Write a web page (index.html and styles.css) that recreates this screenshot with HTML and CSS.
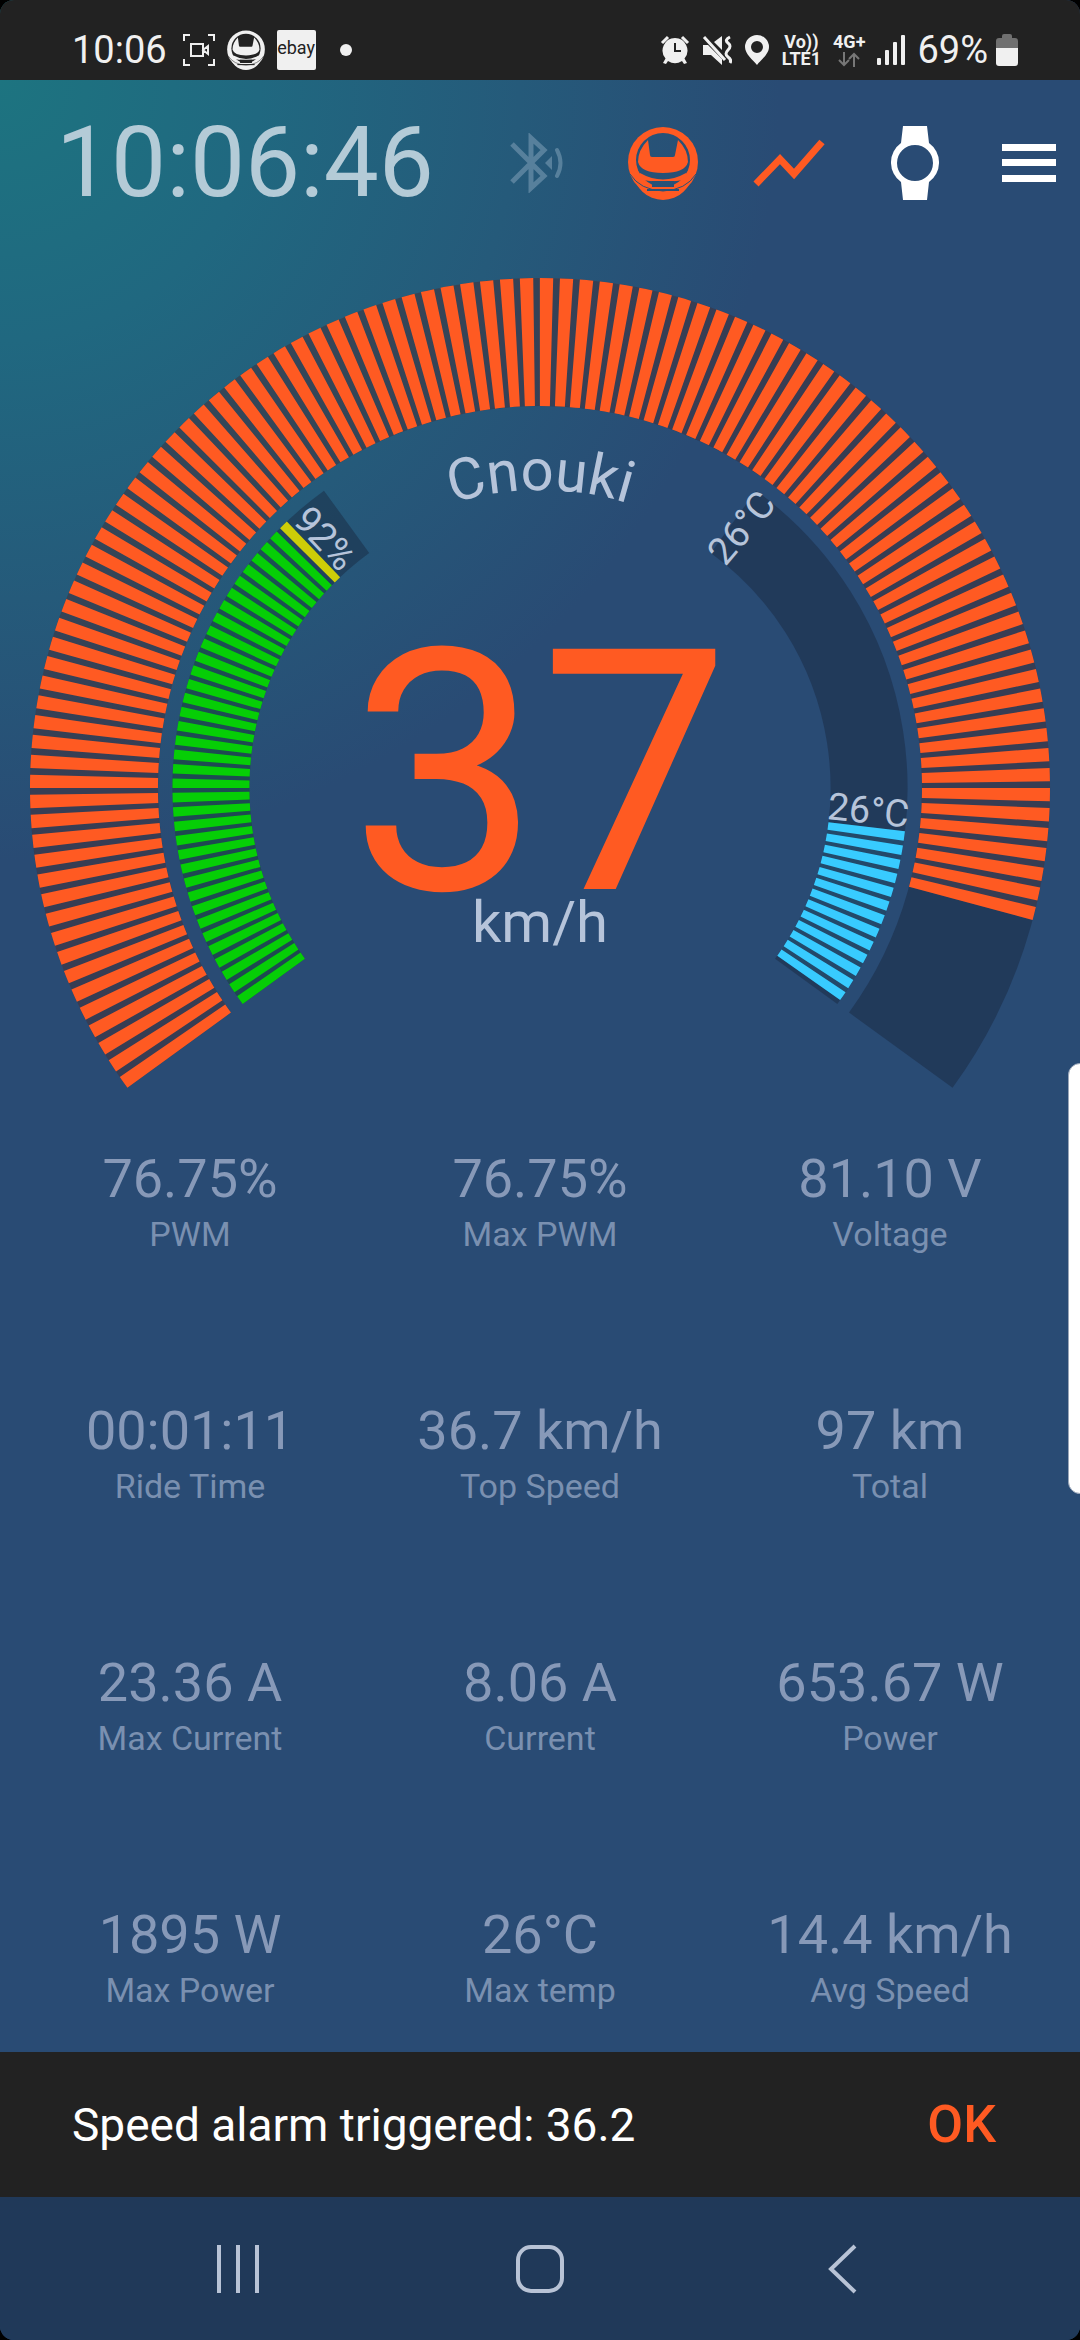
FILE: index.html
```html
<!DOCTYPE html>
<html lang="en">
<head>
<meta charset="utf-8">
<meta name="viewport" content="width=device-width, initial-scale=1">
<title>Ride dashboard</title>
<link rel="stylesheet" href="styles.css">
</head>
<body>
<svg class="defs" aria-hidden="true">
  <symbol id="wheel" viewBox="0 0 70 74">
    <mask id="wheel-cut">
      <rect width="70" height="74" fill="#fff"/>
      <path d="M2 48Q12 64 35 65Q58 64 68 48" fill="none" stroke="#000" stroke-width="1"/>
      <circle cx="35" cy="34" r="27" fill="#000"/>
      <path d="M12 47Q35 60 58 47L62 53Q35 58 8 53Z" fill="#fff"/>
      <rect x="24" y="55" width="22" height="6" fill="#000"/>
      <rect x="19" y="63" width="32" height="2" fill="#000"/>
    </mask>
    <g mask="url(#wheel-cut)" fill="currentColor">
      <circle cx="35" cy="36" r="35"/>
      <ellipse cx="35" cy="46" rx="29" ry="28"/>
    </g>
    <path d="M20 14L22 29Q22 31 24 31H45Q47 31 47 29L50 14Q60 24 60 36Q57 47 35 47Q13 47 10 36Q10 24 20 14Z" fill="currentColor"/>
  </symbol>
</svg>

<div class="screen">
  <div class="status">
    <div class="status-left">
      <span class="status-text status-time">10:06</span>
      <svg width="32" height="32" viewBox="0 0 32 32" fill="none" stroke="currentColor" stroke-width="2">
        <path d="M1 7V1H7M25 1H31V7M31 25V31H25M7 31H1V25"/>
        <path d="M8 10H20V22H8ZM20 16L25 12V20Z"/>
      </svg>
      <svg width="38" height="40"><use href="#wheel"/></svg>
      <span class="ebay">ebay</span>
      <span class="dot"></span>
    </div>
    <div class="status-right">
      <svg width="30" height="30" viewBox="0 0 30 30" fill="currentColor">
        <path fill-rule="evenodd" d="M15 3A12.500 12.500 0 0 1 24.500 23.500L27 28L24 29L22 26A12.500 12.500 0 0 1 8 26L6 29L3 28L5.500 23.500A12.500 12.500 0 0 1 15 3ZM14 8V17H21V15H16V8Z"/>
        <path d="M2 8L8 2M22 2L28 8" fill="none" stroke="currentColor" stroke-width="3"/>
      </svg>
      <svg width="30" height="30" viewBox="0 0 30 30" fill="currentColor">
        <path d="M12 7L20 1V15ZM1 10H6L20 24V30L9 20H1Z"/>
        <path d="M2 2L23 25M28 2Q22 5 26 8T26 15T26 22T28 28" fill="none" stroke="currentColor" stroke-width="3"/>
      </svg>
      <svg width="26" height="30" viewBox="0 0 26 30" fill="currentColor">
        <path fill-rule="evenodd" d="M13 0A12 12 0 0 1 25 12C25 19 17 25 13 30C9 25 1 19 1 12A12 12 0 0 1 13 0ZM13 6A6 6 0 1 0 13 18A6 6 0 1 0 13 6Z"/>
      </svg>
      <span class="net">Vo))<br>LTE1</span>
      <span class="net">4G+
        <svg class="arrows" width="24" height="15" viewBox="0 0 24 15" fill="none" stroke="currentColor" stroke-width="2">
          <path d="M7 0V13M2 8L7 13L12 8M17 15V2M12 7L17 2L22 7"/>
        </svg>
      </span>
      <svg width="28" height="30" viewBox="0 0 28 30" fill="currentColor">
        <rect x="0" y="23" width="4" height="7" rx="1"/><rect x="8" y="15" width="4" height="15" rx="1"/><rect x="16" y="7" width="4" height="23" rx="1"/><rect x="24" y="0" width="4" height="30" rx="1"/>
      </svg>
      <span class="battery">
        <span class="status-text">69%</span>
        <svg width="22" height="32" viewBox="0 0 22 32">
          <path d="M0 15V7Q0 4 3 4H6V2Q6 0 8 0H14Q16 0 16 2V4H19Q22 4 22 7V15Z" fill="#707070"/>
          <path d="M0 14H22V29Q22 32 19 32H3Q0 32 0 29Z" fill="currentColor"/>
        </svg>
      </span>
    </div>
  </div>

  <header class="toolbar">
    <time class="clock">10:06:46</time>
    <button class="tool tool-muted" aria-label="Bluetooth">
      <svg width="54" height="60" viewBox="0 0 54 60" fill="none" stroke="currentColor" stroke-width="5">
        <path d="M2 11L34 43L21 55V5L34 17L2 49"/>
        <path d="M47 17Q54 30 47 43" stroke-width="4" stroke-linecap="round"/>
        <path d="M42 23V37L35 30Z" fill="currentColor" stroke="none"/>
      </svg>
    </button>
    <button class="tool tool-active" aria-label="Wheel"><svg width="70" height="74"><use href="#wheel"/></svg></button>
    <button class="tool tool-active" aria-label="Ride log">
      <svg width="72" height="48" viewBox="0 0 72 48" fill="none" stroke="currentColor" stroke-width="7">
        <path d="M3 45L27 20L41 35L69 3"/>
      </svg>
    </button>
    <button class="tool" aria-label="Watch">
      <svg width="48" height="74" viewBox="0 0 48 74" fill="currentColor">
        <path fill-rule="evenodd" d="M12 0H36L38 17A24 24 0 0 1 38 56L36 74H12L10 56A24 24 0 0 1 10 17ZM24 19A18 18 0 1 0 24 55A18 18 0 1 0 24 19Z"/>
      </svg>
    </button>
    <button class="tool tool-menu" aria-label="Menu">
      <svg width="54" height="38" viewBox="0 0 54 38" fill="currentColor">
        <rect width="54" height="7"/><rect y="15" width="54" height="7"/><rect y="31" width="54" height="7"/>
      </svg>
    </button>
  </header>

  <main class="content">
    <svg class="gauge" viewBox="0 246 1080 860" role="img" aria-label="Speed 37 km/h, battery 92%, temperature 26°C">
      <defs><path id="name-arc" d="M242 788A298 298 0 0 1 838 788"/></defs>

      <g class="outer">
        <path class="track" d="M179.200 1050.200A446 446 0 1 1 900.800 1050.200"/>
        <path class="tint orange" d="M179.200 1050.200A446 446 0 1 1 970.800 903.400"/>
        <path class="ticks orange" pathLength="924" d="M179.200 1050.200A446 446 0 1 1 970.800 903.400"/>
      </g>

      <g class="inner">
        <path class="track" d="M273.800 981.400A329 329 0 0 1 346.600 521.800"/>
        <path class="tint green" d="M273.800 981.400A329 329 0 0 1 304.300 558.400"/>
        <path class="ticks green" pathLength="321" d="M273.800 981.400A329 329 0 0 1 304.300 558.400"/>
        <path class="yellow" d="M307.400 555.400A329 329 0 0 1 313.500 549.400"/>
        <path class="track" d="M733.400 521.800A329 329 0 0 1 806.200 981.400"/>
        <path class="tint blue" d="M866.700 826.700A329 329 0 0 1 808.700 977.900"/>
        <path class="ticks blue" pathLength="114" d="M866.700 826.700A329 329 0 0 1 808.700 977.900"/>
      </g>

      <g class="gauge-text">
        <text class="name"><textPath href="#name-arc" startOffset="50%">Cnouki</textPath></text>
        <text class="mark" x="211" y="788" transform="rotate(47 540 788)">92%</text>
        <text class="mark" x="869" y="788" transform="rotate(-50 540 788)">26°C</text>
        <text class="mark" x="869" y="789" transform="rotate(6 540 788)">26°C</text>
        <text class="speed" x="540" y="889">37</text>
        <text class="unit" x="540" y="942">km/h</text>
      </g>
    </svg>

    <dl class="stats">
      <div class="stat"><dt>PWM</dt><dd>76.75%</dd></div>
      <div class="stat"><dt>Max PWM</dt><dd>76.75%</dd></div>
      <div class="stat"><dt>Voltage</dt><dd>81.10 V</dd></div>
      <div class="stat"><dt>Ride Time</dt><dd>00:01:11</dd></div>
      <div class="stat"><dt>Top Speed</dt><dd>36.7 km/h</dd></div>
      <div class="stat"><dt>Total</dt><dd>97 km</dd></div>
      <div class="stat"><dt>Max Current</dt><dd>23.36 A</dd></div>
      <div class="stat"><dt>Current</dt><dd>8.06 A</dd></div>
      <div class="stat"><dt>Power</dt><dd>653.67 W</dd></div>
      <div class="stat"><dt>Max Power</dt><dd>1895 W</dd></div>
      <div class="stat"><dt>Max temp</dt><dd>26°C</dd></div>
      <div class="stat"><dt>Avg Speed</dt><dd>14.4 km/h</dd></div>
    </dl>
  </main>

  <div class="snackbar" role="alert">
    <span>Speed alarm triggered: 36.2</span>
    <button class="ok">OK</button>
  </div>

  <nav class="navbar">
    <button aria-label="Recents">
      <svg width="44" height="48" viewBox="0 0 44 48" fill="none" stroke="currentColor" stroke-width="4"><path d="M3 0V48M22 0V48M41 0V48"/></svg>
    </button>
    <button aria-label="Home">
      <svg width="48" height="48" viewBox="0 0 48 48" fill="none" stroke="currentColor" stroke-width="4"><rect x="2" y="2" width="44" height="44" rx="13"/></svg>
    </button>
    <button aria-label="Back">
      <svg width="30" height="50" viewBox="0 0 30 50" fill="none" stroke="currentColor" stroke-width="4"><path d="M28 2L4 25L28 48"/></svg>
    </button>
  </nav>

  <span class="edge-handle"></span>
</div>
</body>
</html>
```

FILE: styles.css
```css
* { box-sizing: border-box; }

body {
  margin: 0;
  background: #000;
  font-family: Roboto, "Liberation Sans", sans-serif;
}

button {
  padding: 0;
  border: 0;
  background: none;
  color: inherit;
  font: inherit;
}

svg { display: block; }

.defs {
  position: absolute;
  width: 0;
  height: 0;
}

.screen {
  position: relative;
  display: flex;
  flex-direction: column;
  min-height: 100vh;
  overflow: hidden;
  border-radius: 14px;
  background: radial-gradient(circle at 0 80px, #1d7480 0, #206880 260px, #255a7a 520px, #294b74 780px);
}

/* system status bar */
.status {
  display: flex;
  justify-content: space-between;
  align-items: center;
  padding: 20px 62px 0 72px;
  height: 80px;
  background: #222;
  color: #f0f0f0;
}

.status-left,
.status-right {
  display: flex;
  align-items: center;
  gap: 12px;
}

.status-text {
  font-size: 38px;
  line-height: 44px;
}

.status-time { padding-right: 4px; }

.ebay {
  width: 39px;
  height: 40px;
  border-radius: 2px;
  background: #f0f0f0;
  color: #222;
  font-size: 18px;
  line-height: 36px;
  text-align: center;
}

.dot {
  width: 12px;
  height: 12px;
  margin-left: 12px;
  border-radius: 50%;
  background: #f0f0f0;
}

.net {
  font-size: 18px;
  font-weight: 700;
  line-height: 17px;
  text-align: center;
}

.arrows {
  margin: 2px auto 0;
  color: #777;
}

.battery {
  display: flex;
  align-items: center;
  gap: 8px;
}

/* app toolbar */
.toolbar {
  display: flex;
  align-items: center;
  height: 166px;
  padding-left: 56px;
  color: #fff;
}

.clock {
  flex: 1;
  color: #b4cbd7;
  font-size: 98px;
  line-height: 116px;
}

.tool {
  display: grid;
  place-items: center;
  width: 126px;
  height: 126px;
}

.tool-menu { width: 102px; }
.tool-muted { color: #57809c; }
.tool-active { color: #ff5a22; }

/* gauge */
.content { flex: 1; }

.gauge {
  width: 100%;
  fill: none;
}

.outer { stroke-width: 128px; }
.inner { stroke-width: 77px; }
.track { stroke: #18263c; stroke-opacity: 0.45; }
.tint { stroke-opacity: 0.1; }
.ticks { stroke-dasharray: 6 3; }
.orange { stroke: #ff5a22; }
.green { stroke: #06ce06; }
.yellow { stroke: #cdcd08; }
.blue { stroke: #38cbff; }

.gauge-text {
  fill: #b6c4da;
  text-anchor: middle;
}

.name { font-size: 58px; }
.mark { font-size: 38px; }
.unit { font-size: 58px; }

.speed {
  fill: #ff5a22;
  font-size: 338px;
}

/* ride statistics */
.stats {
  display: grid;
  grid-template-columns: repeat(3, 1fr);
  row-gap: 142px;
  margin: 0;
  padding: 40px 15px;
  text-align: center;
}

.stat {
  display: flex;
  flex-direction: column-reverse;
}

.stat dt {
  color: #7a90b0;
  font-size: 34px;
  line-height: 44px;
}

.stat dd {
  margin: 0;
  color: #8799b8;
  font-size: 54px;
  line-height: 66px;
}

/* alarm message */
.snackbar {
  display: flex;
  justify-content: space-between;
  align-items: center;
  min-height: 145px;
  padding: 0 84px 0 72px;
  background: #222;
  color: #fff;
  font-size: 46px;
}

.ok {
  color: #ff5a22;
  font-size: 52px;
  font-weight: 500;
}

/* system navigation */
.navbar {
  display: grid;
  grid-template-columns: repeat(3, 1fr);
  min-height: 143px;
  padding: 0 87px;
  background: #203959;
  color: #b8c3d6;
}

.navbar button {
  display: grid;
  place-items: center;
}

/* edge panel handle laid over the dashboard */
.edge-handle {
  position: absolute;
  top: 1063px;
  right: -12px;
  width: 24px;
  height: 431px;
  border: 1px solid #9aa6b8;
  border-radius: 12px;
  background: #fff;
}
```
